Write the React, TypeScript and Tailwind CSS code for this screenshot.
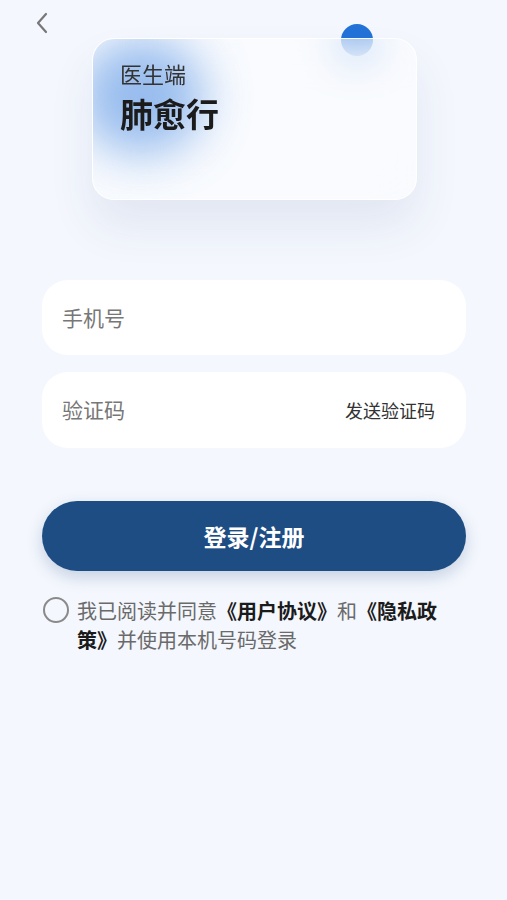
import React from "react";

export default function App() {
  return (
    <div
      className="relative min-h-[900px] w-full overflow-hidden bg-[#f4f7fd]"
      style={{ fontFamily: '"Noto Sans CJK SC", "Noto Sans", sans-serif' }}
    >
      {/* header */}
      <div className="h-[38px] pl-[35px] pt-[12px]">
        <svg width="14" height="22" viewBox="0 0 14 22" fill="none">
          <path d="M11 2 L3 11 L11 20" stroke="#777" strokeWidth="2.2" strokeLinecap="round" strokeLinejoin="round" />
        </svg>
      </div>

      {/* glass card */}
      <div className="relative ml-[92px] w-[325px] h-[162px]">
        <div className="absolute left-[249px] top-[-14px] h-[32px] w-[32px] rounded-full bg-[#2272d8]" />
        <div className="relative h-full w-full overflow-hidden rounded-[22px] border border-white/90 bg-white/45 pl-[27px] pt-[19px] shadow-[0_26px_46px_rgba(40,70,130,0.09)] backdrop-blur-[20px]">
          <div className="absolute left-[-14px] top-[0px] h-[115px] w-[125px] rounded-full bg-[#76a7e8] opacity-75 blur-[24px]" />
          <div className="relative text-[22px] leading-[30px] text-[#333]">医生端</div>
          <div className="relative mt-[4px] text-[33px] font-bold leading-[42px] text-[#1b1b1b]">肺愈行</div>
        </div>
      </div>

      {/* inputs */}
      <div className="mt-[80px] ml-[42px] flex w-[424px] flex-col gap-[17px]">
        <div className="flex h-[75px] items-center rounded-[26px] bg-white pl-[20px]">
          <span className="text-[21px] text-[#777]">手机号</span>
        </div>
        <div className="flex h-[76px] items-center justify-between rounded-[26px] bg-white pl-[20px] pr-[31px]">
          <span className="text-[21px] text-[#777]">验证码</span>
          <span className="text-[18px] text-[#333]">发送验证码</span>
        </div>
      </div>

      {/* button */}
      <div className="mt-[53px] ml-[42px] w-[424px]">
        <button className="flex h-[70px] w-full items-center justify-center rounded-full bg-[#1e4d83] shadow-[0_6px_16px_rgba(30,77,131,0.22)]">
          <span className="text-[23px] font-bold text-white">登录/注册</span>
        </button>
      </div>

      {/* agreement */}
      <div className="mt-[25px] ml-[43px] flex items-start gap-[8px]">
        <div className="mt-[1px] h-[26px] w-[26px] shrink-0 rounded-full border-2 border-[#8a8a8a]" />
        <p className="w-[372px] text-[20px] leading-[29px] text-[#6a6a6a]">
          <span>我已阅读并同意</span>
          <b className="font-bold text-[#1b1b1b]">《用户协议》</b>
          <span>和</span>
          <b className="font-bold text-[#1b1b1b]">《隐私政</b>
          <b className="font-bold text-[#1b1b1b]">策》</b>
          <span>并使用本机号码登录</span>
        </p>
      </div>
    </div>
  );
}
